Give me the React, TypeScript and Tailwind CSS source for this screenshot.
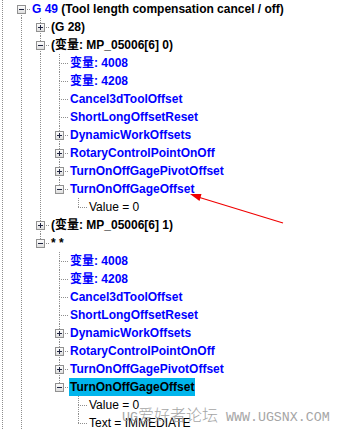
import React from "react";

type Node = {
  depth: number;
  box?: "+" | "-";
  last?: boolean;
  guides?: boolean[];
  label: React.ReactNode;
  tone?: "blue" | "black" | "plain";
  selected?: boolean;
};

const DOT = "#8e8e8e";

const rows: Node[] = [
  {
    depth: 0,
    box: "-",
    label: (
      <>
        <span className="text-[#0000ff]">G 49</span> (Tool length compensation cancel / off)
      </>
    ),
  },
  { depth: 1, box: "+", guides: [true], label: "(G 28)" },
  { depth: 1, box: "-", guides: [true], label: "(变量: MP_05006[6] 0)" },
  { depth: 2, guides: [true, true], label: "变量: 4008", tone: "blue" },
  { depth: 2, guides: [true, true], label: "变量: 4208", tone: "blue" },
  { depth: 2, guides: [true, true], label: "Cancel3dToolOffset", tone: "blue" },
  { depth: 2, guides: [true, true], label: "ShortLongOffsetReset", tone: "blue" },
  { depth: 2, box: "+", guides: [true, true], label: "DynamicWorkOffsets", tone: "blue" },
  { depth: 2, box: "+", guides: [true, true], label: "RotaryControlPointOnOff", tone: "blue" },
  { depth: 2, box: "+", guides: [true, true], label: "TurnOnOffGagePivotOffset", tone: "blue" },
  { depth: 2, box: "-", last: true, guides: [true, true], label: "TurnOnOffGageOffset", tone: "blue" },
  { depth: 3, last: true, guides: [true, true, false], label: "Value = 0", tone: "plain" },
  { depth: 1, box: "+", guides: [true], label: "(变量: MP_05006[6] 1)" },
  { depth: 1, box: "-", last: true, guides: [true], label: "* *" },
  { depth: 2, guides: [true, false], label: "变量: 4008", tone: "blue" },
  { depth: 2, guides: [true, false], label: "变量: 4208", tone: "blue" },
  { depth: 2, guides: [true, false], label: "Cancel3dToolOffset", tone: "blue" },
  { depth: 2, guides: [true, false], label: "ShortLongOffsetReset", tone: "blue" },
  { depth: 2, box: "+", guides: [true, false], label: "DynamicWorkOffsets", tone: "blue" },
  { depth: 2, box: "+", guides: [true, false], label: "RotaryControlPointOnOff", tone: "blue" },
  { depth: 2, box: "+", guides: [true, false], label: "TurnOnOffGagePivotOffset", tone: "blue" },
  {
    depth: 2,
    box: "-",
    last: true,
    guides: [true, false],
    label: "TurnOnOffGageOffset",
    tone: "black",
    selected: true,
  },
  { depth: 3, guides: [true, false, false], label: "Value = 0", tone: "plain" },
  { depth: 3, last: true, guides: [true, false, false], label: "Text = IMMEDIATE", tone: "plain" },
];

const Guides = ({ depth, box, last, guides = [] }: Node) => {
  const c = 21 + 19 * depth;
  const w = c + 10;
  return (
    <svg width={w} height={18} className="shrink-0" shapeRendering="crispEdges">
      <g stroke={DOT} strokeWidth={1} strokeDasharray="1 1">
        <line x1={2.5} y1={0} x2={2.5} y2={18} />
        {guides.map((on, k) =>
          on ? <line key={k} x1={21 + 19 * k + 0.5} y1={0} x2={21 + 19 * k + 0.5} y2={18} /> : null,
        )}
        {depth > 0 && <line x1={c + 0.5} y1={0} x2={c + 0.5} y2={10} />}
        {!last && <line x1={c + 0.5} y1={9} x2={c + 0.5} y2={18} />}
        <line x1={c} y1={9.5} x2={c + 9} y2={9.5} />
      </g>
      {box && (
        <g>
          <defs>
            <linearGradient id={`bx${depth}`} x1="0" y1="0" x2="0" y2="1">
              <stop offset="0" stopColor="#ffffff" />
              <stop offset="1" stopColor="#dcdcdc" />
            </linearGradient>
          </defs>
          <rect x={c - 3.5} y={5.5} width={8} height={8} fill={`url(#bx${depth})`} stroke="#919191" />
          <line x1={c - 2} y1={9.5} x2={c + 3} y2={9.5} stroke="#1f2440" />
          {box === "+" && <line x1={c + 0.5} y1={7} x2={c + 0.5} y2={12} stroke="#1f2440" />}
        </g>
      )}
    </svg>
  );
};

const Row = (node: Node) => {
  const tone =
    node.tone === "blue"
      ? "font-bold text-[#0000ff]"
      : node.tone === "plain"
        ? "font-normal text-black"
        : "font-bold text-black";
  return (
    <div className="flex h-[18px] items-center">
      <Guides {...node} />
      <span
        className={`whitespace-nowrap px-[1px] text-[12px] leading-[18px] ${tone} ${
          node.selected ? "bg-[#00b5ec]" : ""
        }`}
      >
        {node.label}
      </span>
    </div>
  );
};

export default function App() {
  return (
    <div
      className="relative h-[429px] w-[337px] overflow-hidden bg-white"
      style={{ fontFamily: '"Liberation Sans", Arial, "Noto Sans CJK SC", sans-serif' }}
    >
      <div className="flex flex-col">
        {rows.map((r, i) => (
          <Row key={i} {...r} />
        ))}
      </div>

      {/* red pointer arrow */}
      <svg className="pointer-events-none absolute left-0 top-0" width={337} height={429}>
        <line x1={283} y1={223} x2={198} y2={197} stroke="#f00000" strokeWidth={1.2} />
        <polygon points="190,194 201.5,194 199.5,201" fill="#f00000" />
      </svg>

      {/* watermark */}
      <div className="pointer-events-none absolute left-[122px] top-[402px] flex items-baseline text-[#9c9c9c] opacity-90">
        <span className="text-[13.3px]" style={{ fontFamily: '"Liberation Mono", monospace' }}>
          UG
        </span>
        <span className="text-[16px] font-light" style={{ fontFamily: '"Noto Sans CJK SC", sans-serif' }}>
          爱好者论坛
        </span>
        <span className="ml-[8px] text-[13.3px]" style={{ fontFamily: '"Liberation Mono", monospace' }}>
          WWW.UGSNX.COM
        </span>
      </div>
    </div>
  );
}
